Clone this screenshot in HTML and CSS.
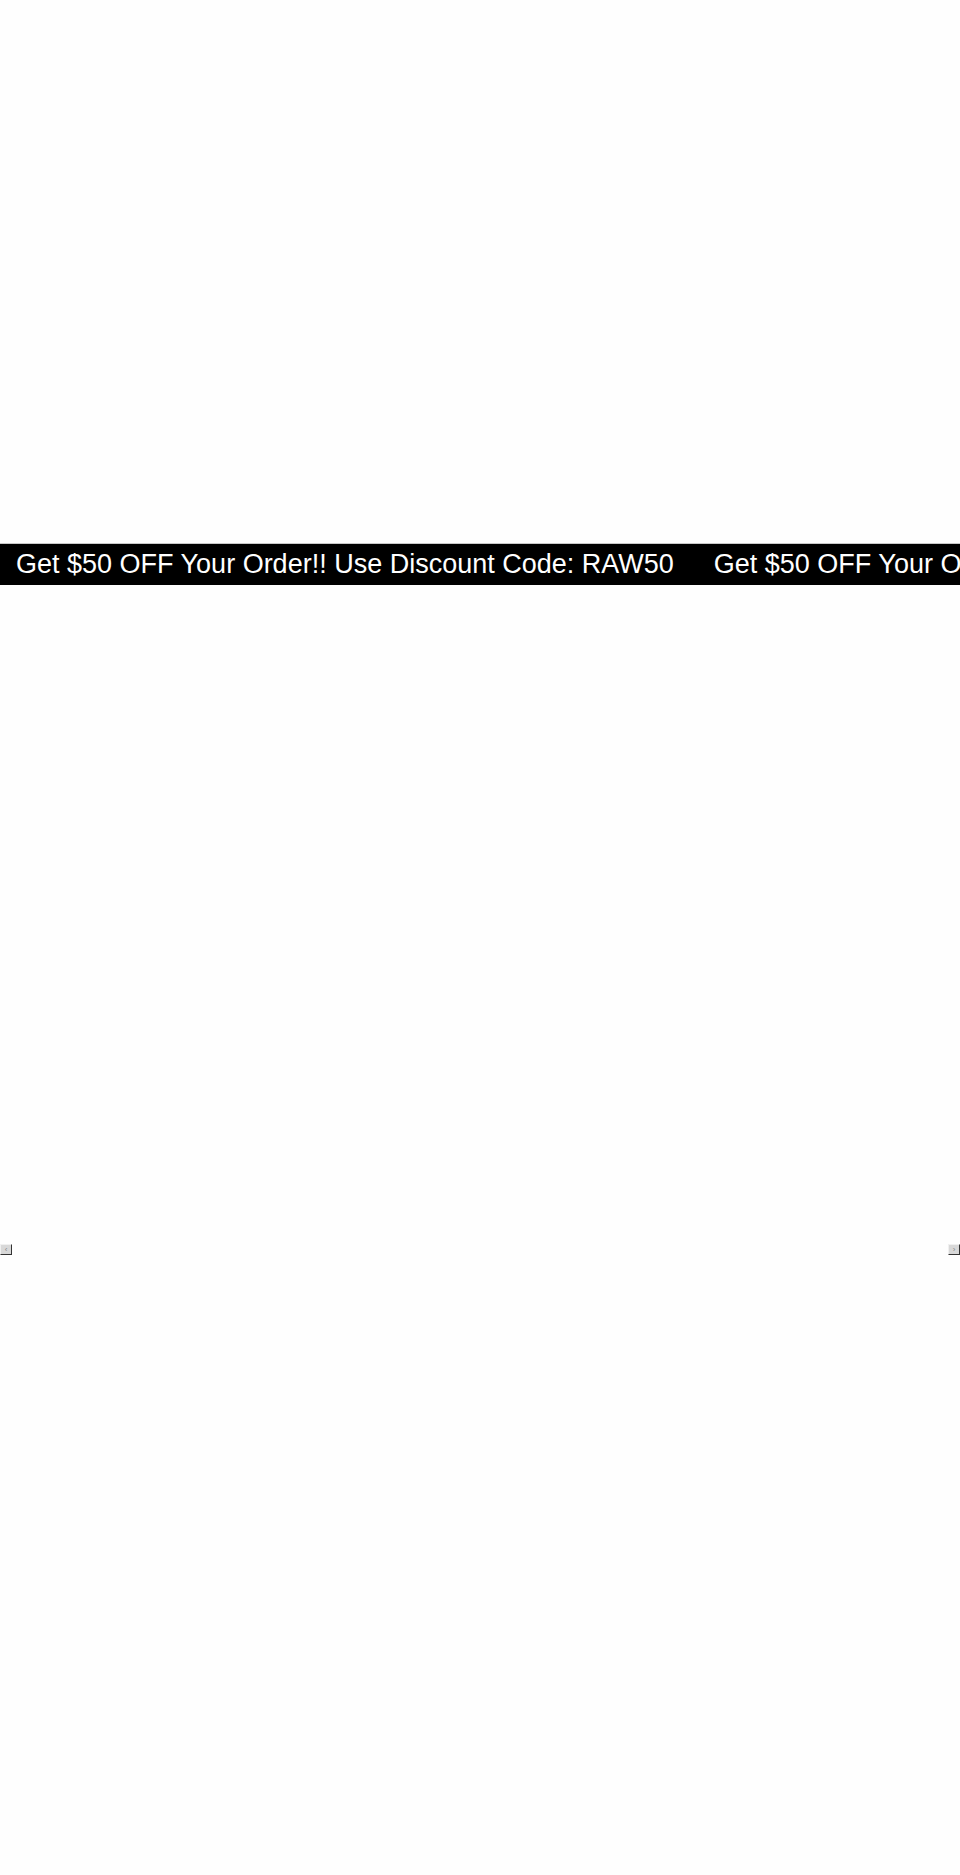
FILE: index.html
```html
<!DOCTYPE html>
<html lang="en">
<head>
<meta charset="utf-8">
<title>RAW</title>
<link rel="stylesheet" href="styles.css">
</head>
<body>
<div class="hero"></div>
<div class="marquee">
  <div class="track">
    <span class="msg">Get $50 OFF Your Order!! Use Discount Code: RAW50</span>
    <span class="msg">Get $50 OFF Your Order!! Use Discount Code: RAW50</span>
  </div>
</div>
<div class="slider">
  <div class="arrows">
    <button class="arrow prev" aria-label="Previous"><span class="glyph">‹</span></button>
    <button class="arrow next" aria-label="Next"><span class="glyph">›</span></button>
  </div>
</div>
</body>
</html>
```
FILE: styles.css
```css
html, body {
  margin: 0;
  padding: 0;
  background: #fefefe;
}
body {
  width: 960px;
  height: 1875px;
  overflow: hidden;
  font-family: "Liberation Sans", Arial, sans-serif;
}
.hero {
  height: 543px;
}
.marquee {
  height: 42px;
  background: #000;
  border-top: 1px solid #c8c8c8;
  box-sizing: border-box;
  overflow: hidden;
}
.track {
  display: flex;
  gap: 40px;
  padding-left: 16px;
  white-space: nowrap;
  color: #fff;
  font-size: 27px;
  line-height: 40px;
}
.msg {
  flex: none;
}
.slider {
  padding-top: 659px;
}
.arrows {
  display: flex;
  justify-content: space-between;
}
.arrow {
  width: 12px;
  height: 11px;
  padding: 0;
  margin: 0;
  border: 1px solid;
  border-color: #f0f0f0 #333 #333 #f0f0f0;
  background: #d8d8d8;
  display: flex;
  align-items: center;
  justify-content: center;
  box-sizing: border-box;
}
.glyph {
  font-size: 8px;
  line-height: 8px;
  color: #888;
}
```
